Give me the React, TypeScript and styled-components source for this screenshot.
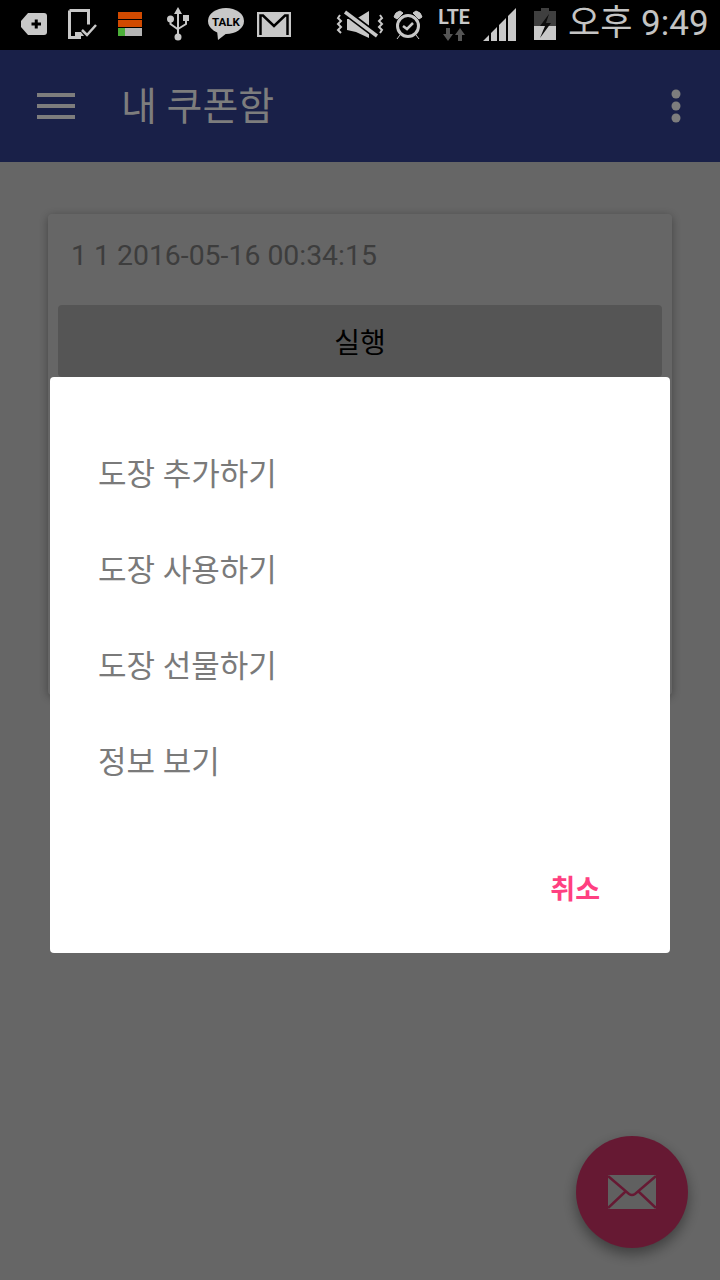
import React from "react";
import styled, { createGlobalStyle } from "styled-components";

const Global = createGlobalStyle`
  html, body { margin: 0; padding: 0; background: #000; }
  body { font-family: Roboto, "Noto Sans CJK KR", sans-serif; }
  * { box-sizing: border-box; }
`;

const Screen = styled.div`
  width: 720px;
  height: 1280px;
  display: flex;
  flex-direction: column;
  overflow: hidden;
`;

const StatusBar = styled.header`
  height: 50px;
  flex: none;
  background: #000;
  display: flex;
  align-items: center;
  padding: 0 0 2px 21px;
  color: #c8c8c8;
`;

const Glyph = styled.svg<{ $gap?: number }>`
  flex: none;
  display: block;
  overflow: visible;
  margin-left: ${(p) => p.$gap ?? 0}px;
`;

const Clock = styled.span`
  margin-left: 12px;
  font-size: 35px;
  line-height: 50px;
  white-space: nowrap;
  color: #c4c4c4;
  font-family: Roboto, "Noto Sans CJK KR", sans-serif;
`;

const Main = styled.div`
  position: relative;
  flex: 1;
  display: flex;
  flex-direction: column;
  background: #fff;
`;

const Toolbar = styled.div`
  height: 112px;
  flex: none;
  background: #3f51b5;
  display: flex;
  align-items: center;
  padding: 0 39px 0 37px;
  color: #7d7d7d;
`;

const ToolbarIcon = styled.svg`
  flex: none;
  position: relative;
  z-index: 1;
`;

const Title = styled.h1`
  position: relative;
  z-index: 1;
  margin: 2px 0 0 46px;
  flex: 1;
  font-size: 39px;
  line-height: 1;
  font-weight: 400;
`;

const Content = styled.main`
  flex: 1;
  padding: 52px 48px 0;
`;

const Card = styled.section`
  height: 481px;
  background: #ffffff;
  border-radius: 4px;
  box-shadow: 0 2px 10px rgba(0, 0, 0, 0.35);
  padding: 0 10px;
`;

const CardText = styled.p`
  margin: 0 0 8px;
  height: 83px;
  padding-left: 13px;
  display: flex;
  align-items: center;
  font-size: 28.4px;
  color: #9a9a9a;
`;

const ActionButton = styled.button`
  display: block;
  width: 100%;
  height: 72px;
  border: 0;
  border-radius: 4px;
  background: #d4d4d4;
  color: #000;
  font: 400 28px Roboto, "Noto Sans CJK KR", sans-serif;
`;

const Fab = styled.button`
  position: absolute;
  right: 32px;
  bottom: 32px;
  width: 112px;
  height: 112px;
  border: 0;
  padding: 0;
  border-radius: 50%;
  background: #ff4081;
  box-shadow: 0 6px 14px rgba(0, 0, 0, 0.4);
  display: flex;
  align-items: center;
  justify-content: center;
`;

const Scrim = styled.div`
  position: absolute;
  inset: 0;
  background: rgba(0, 0, 0, 0.6);
  display: flex;
  align-items: center;
  justify-content: center;
`;

const Dialog = styled.div`
  width: 620px;
  height: 576px;
  background: #fff;
  border-radius: 4px;
  display: flex;
  flex-direction: column;
  padding: 46px 48px 0;
`;

const MenuItem = styled.div`
  height: 96px;
  display: flex;
  align-items: center;
  font-size: 31px;
  color: #7a7a7a;
`;

const DialogActions = styled.div`
  margin-top: 48px;
  height: 64px;
  display: flex;
  align-items: center;
  justify-content: flex-end;
  padding-right: 22px;
`;

const CancelButton = styled.button`
  border: 0;
  padding: 0;
  background: none;
  font: 700 27px Roboto, "Noto Sans CJK KR", sans-serif;
  color: #ff4081;
`;

const C = "#c8c8c8";

const App = () => (
  <Screen>
    <Global />
    <StatusBar>
      <Glyph width="26" height="22" viewBox="0 0 26 22">
        <path d="M7 0h16a3 3 0 0 1 3 3v16a3 3 0 0 1-3 3H7l-7-8V8z" fill={C} />
        <path d="M10.500 11h9.500M15.250 6.500v9" stroke="#000" strokeWidth="3" />
      </Glyph>
      <Glyph $gap={21} width="29" height="30" viewBox="0 0 29 30">
        <path d="M1.500 1.500h19v14M13 28.500H1.500v-27" fill="none" stroke={C} strokeWidth="3" />
        <path d="M7 23h6l3 4H7z" fill={C} />
        <path d="M14 21l5 5 9-10" fill="none" stroke={C} strokeWidth="2.500" />
      </Glyph>
      <Glyph $gap={21} width="24" height="24" viewBox="0 0 24 24">
        <rect width="24" height="7" fill="#d14a00" />
        <rect y="8" width="24" height="7" fill="#d14a00" />
        <rect y="16" width="24" height="8" fill="#b5b5b5" />
        <rect y="16" width="7" height="8" fill="#4caf3a" />
      </Glyph>
      <Glyph $gap={25} width="22" height="34" viewBox="0 0 22 34">
        <path d="M11 0l4 7h-3v20h-2V7H7z" fill={C} />
        <circle cx="11" cy="30" r="3.500" fill={C} />
        <circle cx="3.500" cy="12" r="3.500" fill={C} />
        <rect x="16" y="8" width="6" height="6" fill={C} />
        <path d="M3.500 14v3l7 5M19 14v3l-8 5" fill="none" stroke={C} strokeWidth="2" />
      </Glyph>
      <Glyph $gap={19} width="36" height="32" viewBox="0 0 36 32">
        <ellipse cx="18" cy="13" rx="18" ry="13" fill={C} />
        <path d="M9 22l1 10 9-7z" fill={C} />
        <text x="18" y="17.500" textAnchor="middle" fontSize="11.500" fontWeight="700" fontFamily="Roboto, sans-serif" fill="#000">TALK</text>
      </Glyph>
      <Glyph $gap={13} width="34" height="25" viewBox="0 0 34 25">
        <rect width="34" height="25" fill={C} />
        <path d="M3.500 23V3.500h2.500L17 14 28 3.500h2.500V23" fill="none" stroke="#000" strokeWidth="2.500" />
      </Glyph>
      <Glyph $gap={46} width="46" height="29" viewBox="0 0 46 29">
        <path d="M10 9h9L32 1v27L19 22l-9-2z" fill={C} />
        <path d="M7 1l33 25" stroke="#000" strokeWidth="7" />
        <path d="M8 2l32 24" stroke={C} strokeWidth="3.500" />
        <path d="M3 5L1 8l3 3-3 3 3 3-3 3 3 3M43 5l2 3-3 3 3 3-3 3 3 3-2 3" fill="none" stroke={C} strokeWidth="2" />
      </Glyph>
      <Glyph $gap={10} width="30" height="29" viewBox="0 0 30 29">
        <circle cx="15" cy="16" r="10.500" fill="none" stroke={C} strokeWidth="3" />
        <path d="M10 16l4 3 6-6" fill="none" stroke={C} strokeWidth="2.500" />
        <path d="M1 7q1-5 6-6l3 2-6 6zM29 7q-1-5-6-6l-3 2 6 6zM7 25l-3 4M23 25l3 4" fill={C} stroke={C} strokeWidth="1" />
      </Glyph>
      <Glyph $gap={14} width="34" height="33" viewBox="0 0 34 33">
        <text x="17" y="16" textAnchor="middle" fontSize="19.500" fontWeight="700" fontFamily="Roboto, sans-serif" fill={C}>LTE</text>
        <path d="M9 20h4v6h3l-5 7-5-7h3zM21 33h4v-6h3l-5-7-5 7h3z" fill="#555" />
      </Glyph>
      <Glyph $gap={12} width="34" height="33" viewBox="0 0 34 33">
        <path d="M0 33l6-6v6zM8 25l6-6v14H8zM16 17l7-7v23h-7zM25 8l8-8v33h-8z" fill={C} />
      </Glyph>
      <Glyph $gap={17} width="22" height="32" viewBox="0 0 22 32">
        <path d="M7 0h8v3h7v29H0V3h7z" fill="#3f3f3f" />
        <rect y="18" width="22" height="14" fill={C} />
        <path d="M15 6L6 18h5L6 30l11-15h-5l3-9z" fill="#0c0c0c" />
      </Glyph>
      <Clock>오후 9:49</Clock>
    </StatusBar>
    <Main>
      <Toolbar>
        <ToolbarIcon width="38" height="26" viewBox="0 0 38 26">
          <path d="M0 2h38M0 13h38M0 24h38" stroke="currentColor" strokeWidth="4" />
        </ToolbarIcon>
        <Title>내 쿠폰함</Title>
        <ToolbarIcon width="10" height="34" viewBox="0 0 10 34">
          <circle cx="5" cy="5" r="4.500" fill="currentColor" />
          <circle cx="5" cy="17" r="4.500" fill="currentColor" />
          <circle cx="5" cy="29" r="4.500" fill="currentColor" />
        </ToolbarIcon>
      </Toolbar>
      <Content>
        <Card>
          <CardText>1 1 2016-05-16 00:34:15</CardText>
          <ActionButton>실행</ActionButton>
        </Card>
      </Content>
      <Fab>
        <svg width="48" height="34" viewBox="0 0 48 34">
          <path d="M0 0h48v34H0z" fill="#f0f0f0" />
          <path d="M0 1l21 18q3 2 6 0L48 1M0 33l17-16M48 33L31 17" fill="none" stroke="#ff4081" strokeWidth="2.500" />
        </svg>
      </Fab>
      <Scrim>
        <Dialog>
          <MenuItem>도장 추가하기</MenuItem>
          <MenuItem>도장 사용하기</MenuItem>
          <MenuItem>도장 선물하기</MenuItem>
          <MenuItem>정보 보기</MenuItem>
          <DialogActions>
            <CancelButton>취소</CancelButton>
          </DialogActions>
        </Dialog>
      </Scrim>
    </Main>
  </Screen>
);

export default App;
